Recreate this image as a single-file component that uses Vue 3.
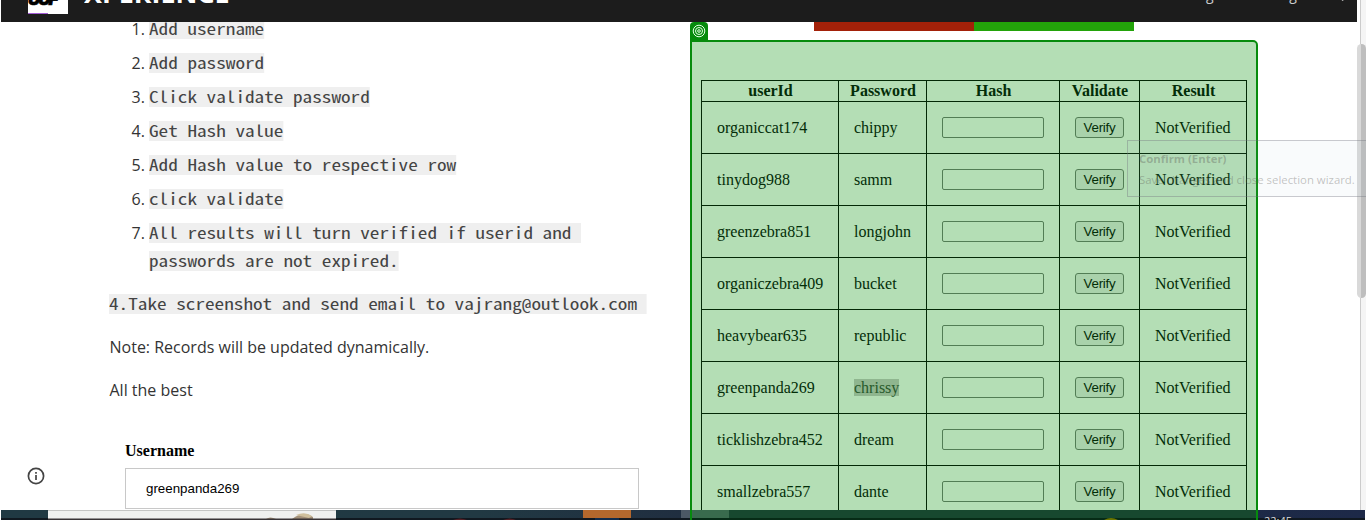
<script setup>
const steps = ['Add username', 'Add password', 'Click validate password', 'Get Hash value', 'Add Hash value to respective row', 'click validate']
const rows = [
  ['organiccat174', 'chippy'],
  ['tinydog988', 'samm'],
  ['greenzebra851', 'longjohn'],
  ['organiczebra409', 'bucket'],
  ['heavybear635', 'republic'],
  ['greenpanda269', 'chrissy'],
  ['ticklishzebra452', 'dream'],
  ['smallzebra557', 'dante']
]
</script>

<template>
  <div class="screen">
    <header class="topbar">
      <div class="logo"><span>UUF</span><i></i></div>
      <div class="brand">XPERIENCE</div>
      <nav><span>Blog</span><span>Login</span><b></b></nav>
    </header>

    <main class="content">
      <section class="notes">
        <ol>
          <li v-for="(s, i) in steps" :key="s"><span class="num">{{ i + 1 }}.</span><code>{{ s }}</code></li>
          <li><span class="num">7.</span><div class="lines"><code>All results will turn verified if userid and </code><code>passwords are not expired.</code></div></li>
        </ol>
        <p class="mail"><code>4.Take screenshot and send email to vajrang@outlook.com </code></p>
        <p>Note: Records will be updated dynamically.</p>
        <p>All the best</p>
        <div class="field">
          <label>Username</label>
          <div class="value">greenpanda269</div>
        </div>
      </section>

      <section class="side">
        <div class="flags"><i class="red"></i><i class="green"></i></div>
        <div class="panel">
          <table>
            <colgroup><col class="c1"><col class="c2"><col class="c3"><col class="c4"><col class="c5"></colgroup>
            <thead><tr><th>userId</th><th>Password</th><th>Hash</th><th>Validate</th><th>Result</th></tr></thead>
            <tbody>
              <tr v-for="r in rows" :key="r[0]">
                <td>{{ r[0] }}</td>
                <td><span :class="{ marked: r[1] === 'chrissy' }">{{ r[1] }}</span></td>
                <td><div class="hash"></div></td>
                <td><div class="verify">Verify</div></td>
                <td>NotVerified</td>
              </tr>
            </tbody>
          </table>
        </div>
      </section>
    </main>

    <svg class="info" viewBox="0 0 18 18"><circle cx="9" cy="9" r="7.6" /><path d="M9 8v5M9 5v1.8" /></svg>
    <div class="target"><svg viewBox="0 0 14 14"><circle cx="7" cy="7" r="5.8" /><circle cx="7" cy="7" r="3.5" /><circle cx="7" cy="7" r="1.3" /></svg></div>
    <div class="track"></div>
    <div class="thumb"></div>
    <div class="tooltip"><b>Confirm (Enter)</b><span>Save changes and close selection wizard.</span></div>
    <svg class="taskbar" viewBox="0 0 1366 10" preserveAspectRatio="none">
      <defs>
        <linearGradient id="bar"><stop offset="0" stop-color="#203943" /><stop offset=".35" stop-color="#213943" /><stop offset=".5" stop-color="#202e40" /><stop offset="1" stop-color="#1d2948" /></linearGradient>
      </defs>
      <path d="M1 0H1365V10H1Z" fill="url(#bar)" />
      <path d="M48 0H336V10H48Z" fill="#f0f0f0" />
      <path d="M48 0H336V1H48Z" fill="#c4c4c4" />
      <path d="M583 0H631V10H583Z" fill="#b4682d" />
      <path d="M681 0H691V10H681Z" fill="#4c5865" />
      <path d="M691 0H1257V10H691Z" fill="#17482f" />
      <path d="M691 0H729V10H691Z" fill="#396b4d" />
      <path d="M266 9Q270 6 276 9ZM292 9Q304 0 313 7V10H295Z" fill="#a4917b" />
      <path d="M296 5Q305 1 312 6L309 8Z" fill="#d0bf9d" />
      <path d="M1 8H48V10H1ZM336 8H1365V10H336Z" fill="#101820" />
      <path d="M48 8.5H336V10H48Z" fill="#393337" />
      <path d="M691 8H1257V10H691Z" fill="#062b16" />
      <path d="M595 8H619V10H595Z" fill="#102b4b" />
      <path d="M453 10Q460 7 467 10ZM503 10Q510 7 516 10Z" fill="#542025" />
      <path d="M1104 10Q1111 6 1118 10Z" fill="#6c7500" />
      <path d="M690 0H692V10H690ZM1256 0H1258V10H1256Z" fill="#068b0c" />
    </svg>
    <div class="clock">22:45</div>
  </div>
</template>

<style>
body { margin: 0; background: #fff; }
</style>
<style scoped>
* { box-sizing: border-box; }
.screen { position: relative; width: 1366px; height: 520px; overflow: hidden; background: #fff; color: #333; font-family: "Open Sans", sans-serif; }
.topbar { position: relative; z-index: 1; height: 22px; width: 1356px; margin-left: 1px; background: #1c1c1c; display: flex; overflow: hidden; }
.logo { position: relative; width: 40px; height: 14px; margin-left: 27px; background: #fff; overflow: hidden; }
.logo span { position: absolute; left: 0; bottom: 3px; color: #000; font: italic 900 17px/24px Inter, sans-serif; letter-spacing: -2px; -webkit-text-stroke: .6px #000; }
.logo i { position: absolute; left: 0; bottom: 0; width: 20px; height: 1px; background: #a35bd5; }
.brand { height: 30px; margin: -21px 0 0 16px; color: #fff; font: 700 24px/30px "Open Sans", sans-serif; transform: scaleX(1.12); transform-origin: left; }
nav { margin: -15px 17px 0 auto; display: flex; gap: 60px; color: #ccc; font-size: 14px; line-height: 20px; }
nav b { width: 3px; height: 16px; margin-left: -32px; background: #ccc; transform: translateY(1px) rotate(-40deg); }
.content { display: flex; height: 498px; }
.notes { width: 690px; padding-left: 109.5px; font-size: 16px; line-height: 28px; }
ol { list-style: none; margin: -7px 0 0; padding: 0 0 0 22px; }
li { display: flex; height: 34px; }
li:last-child { height: 62px; }
.num { width: 17.5px; font-size: 16px; }
/* Half-width Latin glyphs stretched to a 9.6px advance */
code { display: block; width: max-content; height: 20px; margin-top: 4px; color: #444; font: 16px/18px "Noto Sans Mono CJK SC", "Liberation Mono", monospace; background: #efefef; white-space: pre; transform: scaleX(1.2); transform-origin: left; }
.lines code + code { margin-top: 8px; }
p { margin: 0 0 15px; height: 28px; }
.mail { margin-top: 9px; }
.mail code { position: relative; top: 4px; margin: 0 0 0 -.5px; }
.field { width: 514px; margin: 33px 0 0 15.5px; font-family: "Liberation Serif", serif; color: #000; }
label { display: block; font-weight: bold; font-size: 16px; height: 31px; line-height: 28px; }
.value { height: 41px; padding-left: 20px; border: 1px solid #c8c8c8; font: 13.33px/39px "Liberation Sans", sans-serif; }
.side { width: 568px; }
.flags { display: flex; height: 9px; margin: 0 0 9px 124px; }
.flags i { width: 160px; }
.red { background: #a32109; }
.green { background: #23a30a; }
.panel { height: 500px; padding: 38px 0 0 9px; border: 2px solid #068b0c; border-radius: 0 5px 0 0; background: #b4deb5; color: #032d08; font-family: "Liberation Serif", serif; }
table { width: 546px; table-layout: fixed; border-collapse: collapse; font-size: 16px; }
.c1 { width: 137px; } .c2 { width: 88px; } .c3 { width: 133px; } .c4 { width: 80px; } .c5 { width: 107px; }
th, td { border: 1px solid #032806; padding: 0; }
th { height: 21px; padding-left: 1px; line-height: 20px; }
td { height: 52px; padding: 0 15px; line-height: 18px; }
.marked { background: #8fb68f; color: #285a2c; }
.hash { width: 102px; height: 21px; border: 1px solid #527d55; border-radius: 2px; }
.verify { width: 49px; height: 21px; border: 1px solid #527d55; border-radius: 3px; background: #a9d2ab; font: 13.33px/19px "Liberation Sans", sans-serif; letter-spacing: -.25px; text-align: center; }
.info { position: absolute; left: 27px; top: 467px; width: 18px; height: 18px; fill: none; stroke: #444; stroke-width: 1.7; }
.target { position: absolute; left: 690px; top: 22px; width: 18px; height: 19px; padding: 2px; background: #068b0c; border-radius: 4px 4px 0 0; }
.target svg { display: block; width: 14px; height: 14px; fill: none; stroke: #e5ffe5; }
.track { position: absolute; left: 1360px; top: 0; width: 6px; height: 510px; background: #f5f5f5; border-left: 1px solid #ccc; }
.thumb { position: absolute; left: 1357px; top: 44px; width: 9px; height: 254px; border-radius: 5px; background: linear-gradient(90deg, #d9d9d9 4px, #bebebe 4px); }
.tooltip { position: absolute; left: 1127px; top: 140px; width: 245px; height: 57px; padding: 7px 11px; border: 1px solid rgba(110,110,120,.35); background: rgba(150,180,210,.06); color: rgba(90,90,85,.36); font: 11.4px/21px "Open Sans", sans-serif; white-space: nowrap; }
.tooltip b, .tooltip span { display: block; }
.taskbar { position: absolute; left: 0; top: 510px; width: 1366px; height: 10px; }
.clock { position: absolute; left: 1264px; top: 515px; height: 5px; overflow: hidden; color: #ddd; font: 11px/11px "Open Sans", sans-serif; }
</style>
